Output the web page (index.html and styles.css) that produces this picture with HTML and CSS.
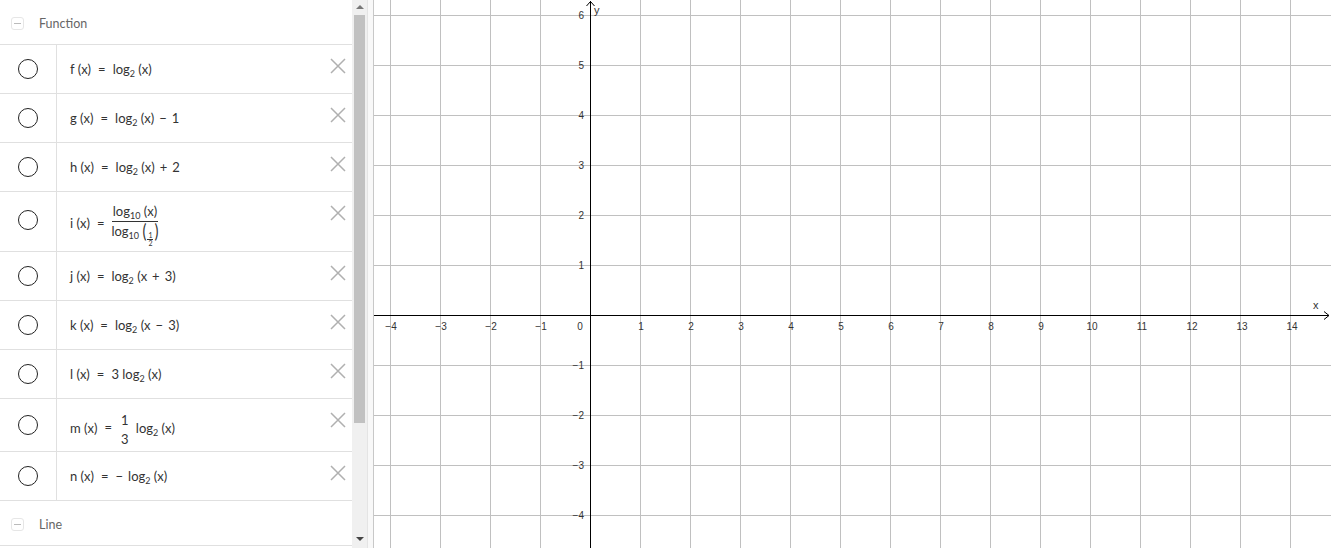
FILE: index.html
```html
<!DOCTYPE html>
<html>
<head>
<meta charset="utf-8">
<link rel="stylesheet" href="styles.css">
</head>
<body>
<div class="app">
  <div class="panel">
    <div class="group-head">
      <span class="collapse"><span class="dash"></span></span>
      <span class="group-title">Function</span>
    </div>

    <div class="row">
      <div class="marble"><span class="circle"></span></div>
      <div class="formula"><span class="expr">f <span class="p">(x)</span><span class="eq">=</span>log<sub>2</sub> <span class="p">(x)</span></span></div>
      <svg class="del" viewBox="0 0 16 16"><path d="M1 1L15 15M15 1L1 15"/></svg>
    </div>
    <div class="row">
      <div class="marble"><span class="circle"></span></div>
      <div class="formula"><span class="expr">g <span class="p">(x)</span><span class="eq">=</span>log<sub>2</sub> <span class="p">(x)</span><span class="op">−</span>1</span></div>
      <svg class="del" viewBox="0 0 16 16"><path d="M1 1L15 15M15 1L1 15"/></svg>
    </div>
    <div class="row">
      <div class="marble"><span class="circle"></span></div>
      <div class="formula"><span class="expr">h <span class="p">(x)</span><span class="eq">=</span>log<sub>2</sub> <span class="p">(x)</span><span class="op">+</span>2</span></div>
      <svg class="del" viewBox="0 0 16 16"><path d="M1 1L15 15M15 1L1 15"/></svg>
    </div>
    <div class="row row-tall">
      <div class="marble"><span class="circle"></span></div>
      <div class="formula fm-tall"><span class="expr">i <span class="p">(x)</span><span class="eq">=</span><span class="frac"><span class="num">log<sub>10</sub> <span class="p">(x)</span></span><span class="den">log<sub>10</sub> <span class="big">(</span><span class="mini"><span class="mn">1</span><span class="md">2</span></span><span class="big">)</span></span></span></span></div>
      <svg class="del" viewBox="0 0 16 16"><path d="M1 1L15 15M15 1L1 15"/></svg>
    </div>
    <div class="row">
      <div class="marble"><span class="circle"></span></div>
      <div class="formula"><span class="expr">j <span class="p">(x)</span><span class="eq">=</span>log<sub>2</sub> <span class="p">(x<span class="op">+</span>3)</span></span></div>
      <svg class="del" viewBox="0 0 16 16"><path d="M1 1L15 15M15 1L1 15"/></svg>
    </div>
    <div class="row">
      <div class="marble"><span class="circle"></span></div>
      <div class="formula"><span class="expr">k <span class="p">(x)</span><span class="eq">=</span>log<sub>2</sub> <span class="p">(x<span class="op">−</span>3)</span></span></div>
      <svg class="del" viewBox="0 0 16 16"><path d="M1 1L15 15M15 1L1 15"/></svg>
    </div>
    <div class="row">
      <div class="marble"><span class="circle"></span></div>
      <div class="formula"><span class="expr">l <span class="p">(x)</span><span class="eq">=</span>3 log<sub>2</sub> <span class="p">(x)</span></span></div>
      <svg class="del" viewBox="0 0 16 16"><path d="M1 1L15 15M15 1L1 15"/></svg>
    </div>
    <div class="row row-mid">
      <div class="marble"><span class="circle"></span></div>
      <div class="formula fm-low"><span class="expr">m <span class="p">(x)</span><span class="eq">=</span><span class="frac frac-small"><span class="num">1</span><span class="den">3</span></span> log<sub>2</sub> <span class="p">(x)</span></span></div>
      <svg class="del" viewBox="0 0 16 16"><path d="M1 1L15 15M15 1L1 15"/></svg>
    </div>
    <div class="row">
      <div class="marble"><span class="circle"></span></div>
      <div class="formula"><span class="expr">n <span class="p">(x)</span><span class="eq">=</span><span class="neg">−</span>log<sub>2</sub> <span class="p">(x)</span></span></div>
      <svg class="del" viewBox="0 0 16 16"><path d="M1 1L15 15M15 1L1 15"/></svg>
    </div>

    <div class="group-head">
      <span class="collapse"><span class="dash"></span></span>
      <span class="group-title">Line</span>
    </div>
  </div>

  <div class="scrollbar">
    <div class="arrow up"></div>
    <div class="thumb"></div>
    <div class="arrow down"></div>
  </div>
  <div class="splitter"></div>

  <div class="graph">
    <svg width="957" height="548" viewBox="0 0 957 548" xmlns="http://www.w3.org/2000/svg">
      <g stroke="#c0c0c0" stroke-width="1" shape-rendering="crispEdges">
        <line x1="16.5" y1="0" x2="16.5" y2="548"/>
        <line x1="66.5" y1="0" x2="66.5" y2="548"/>
        <line x1="116.5" y1="0" x2="116.5" y2="548"/>
        <line x1="166.5" y1="0" x2="166.5" y2="548"/>
        <line x1="266.5" y1="0" x2="266.5" y2="548"/>
        <line x1="316.5" y1="0" x2="316.5" y2="548"/>
        <line x1="366.5" y1="0" x2="366.5" y2="548"/>
        <line x1="416.5" y1="0" x2="416.5" y2="548"/>
        <line x1="466.5" y1="0" x2="466.5" y2="548"/>
        <line x1="516.5" y1="0" x2="516.5" y2="548"/>
        <line x1="566.5" y1="0" x2="566.5" y2="548"/>
        <line x1="616.5" y1="0" x2="616.5" y2="548"/>
        <line x1="666.5" y1="0" x2="666.5" y2="548"/>
        <line x1="716.5" y1="0" x2="716.5" y2="548"/>
        <line x1="766.5" y1="0" x2="766.5" y2="548"/>
        <line x1="816.5" y1="0" x2="816.5" y2="548"/>
        <line x1="866.5" y1="0" x2="866.5" y2="548"/>
        <line x1="916.5" y1="0" x2="916.5" y2="548"/>
        <line x1="0" y1="15.5" x2="957" y2="15.5"/>
        <line x1="0" y1="65.5" x2="957" y2="65.5"/>
        <line x1="0" y1="115.5" x2="957" y2="115.5"/>
        <line x1="0" y1="165.5" x2="957" y2="165.5"/>
        <line x1="0" y1="215.5" x2="957" y2="215.5"/>
        <line x1="0" y1="265.5" x2="957" y2="265.5"/>
        <line x1="0" y1="365.5" x2="957" y2="365.5"/>
        <line x1="0" y1="415.5" x2="957" y2="415.5"/>
        <line x1="0" y1="465.5" x2="957" y2="465.5"/>
        <line x1="0" y1="515.5" x2="957" y2="515.5"/>
      </g>
      <g stroke="#000" stroke-width="1" fill="none">
        <line x1="0" y1="315.5" x2="955" y2="315.5" shape-rendering="crispEdges"/>
        <line x1="216.5" y1="1" x2="216.5" y2="548" shape-rendering="crispEdges"/>
        <polyline points="212.5,6 216.5,1.5 220.5,6"/>
        <polyline points="950,311.5 955,315.5 950,319.5"/>
      </g>
      <g font-family="Liberation Sans, Arial, sans-serif" font-size="10" fill="#333" text-anchor="middle">
        <text x="17" y="330">−4</text>
        <text x="67" y="330">−3</text>
        <text x="117" y="330">−2</text>
        <text x="167" y="330">−1</text>
        <text x="206" y="330">0</text>
        <text x="267" y="330">1</text>
        <text x="317" y="330">2</text>
        <text x="367" y="330">3</text>
        <text x="417" y="330">4</text>
        <text x="467" y="330">5</text>
        <text x="517" y="330">6</text>
        <text x="567" y="330">7</text>
        <text x="617" y="330">8</text>
        <text x="667" y="330">9</text>
        <text x="718" y="330">10</text>
        <text x="768" y="330">11</text>
        <text x="818" y="330">12</text>
        <text x="868" y="330">13</text>
        <text x="918" y="330">14</text>
      </g>
      <g font-family="Liberation Sans, Arial, sans-serif" font-size="10" fill="#333" text-anchor="end">
        <text x="210" y="19">6</text>
        <text x="210" y="69">5</text>
        <text x="210" y="119">4</text>
        <text x="210" y="169">3</text>
        <text x="210" y="219">2</text>
        <text x="210" y="269">1</text>
        <text x="210" y="369">−1</text>
        <text x="210" y="419">−2</text>
        <text x="210" y="469">−3</text>
        <text x="210" y="519">−4</text>
      </g>
      <g font-family="Liberation Sans, Arial, sans-serif" font-size="11" fill="#333">
        <text x="220" y="14">y</text>
        <text x="939" y="309">x</text>
      </g>
    </svg>
  </div>
</div>
</body>
</html>
```

FILE: styles.css
```css
html, body {
  margin: 0;
  padding: 0;
  background: #fff;
}
.app {
  display: flex;
  width: 1331px;
  height: 548px;
  overflow: hidden;
}
.panel {
  width: 352px;
  flex: none;
  height: 548px;
  overflow: hidden;
  background: #fff;
  font-family: Lato, "Open Sans", sans-serif;
}
.group-head {
  height: 45px;
  border-bottom: 1px solid #e0e0e0;
  display: flex;
  align-items: center;
  box-sizing: border-box;
  padding-top: 2px;
}
.collapse {
  width: 13px;
  height: 13px;
  margin-left: 11px;
  border: 1px solid #e6e6e6;
  border-radius: 3px;
  display: flex;
  align-items: center;
  justify-content: center;
  box-sizing: border-box;
}
.dash {
  width: 7px;
  height: 1px;
  background: #bbb;
}
.group-title {
  margin-left: 15px;
  font-size: 12.5px;
  color: #666;
}
.row {
  display: flex;
  height: 49px;
  border-bottom: 1px solid #e0e0e0;
  box-sizing: border-box;
  position: relative;
}
.row-tall { height: 60px; }
.row-mid { height: 53px; }
.marble {
  width: 57px;
  flex: none;
  border-right: 1px solid #e0e0e0;
  display: flex;
  align-items: center;
  justify-content: center;
  box-sizing: border-box;
}
.row-tall .marble { padding-bottom: 4px; }
.circle {
  width: 20px;
  height: 20px;
  border: 1.5px solid #222;
  border-radius: 50%;
  box-sizing: border-box;
  margin-right: 1px;
}
.formula {
  flex: 1;
  display: flex;
  align-items: center;
  padding-left: 13px;
  font-size: 13px;
  color: #333;
}
.fm-low { padding-top: 8px; }
.fm-tall { padding-top: 6px; }
.expr {
  white-space: pre;
  line-height: 16px;
}
.expr sub {
  font-size: 9px;
  vertical-align: -3px;
  line-height: 0;
}
.eq { margin: 0 7px; }
.op { margin: 0 5px; }
.neg { margin-right: 5px; }
.frac {
  display: inline-flex;
  flex-direction: column;
  align-items: center;
  vertical-align: middle;
}
.frac .num {
  display: block;
  padding: 2px 1px 3px;
  border-bottom: 1px solid #333;
  line-height: 14px;
}
.frac .den {
  display: block;
  padding-top: 1px;
  line-height: 17px;
}
.big {
  font-size: 15px;
  display: inline-block;
  transform: scaleY(1.25);
  vertical-align: -1px;
  line-height: 15px;
}
.frac-small {
  margin-right: 2px;
}
.frac-small .num { border-bottom: none; padding: 0 2px 3px; line-height: 14px; }
.frac-small .den { padding-top: 2px; line-height: 14px; }
.mini {
  display: inline-flex;
  flex-direction: column;
  align-items: center;
  font-size: 7px;
  line-height: 7px;
  padding: 0 1px;
  vertical-align: -2px;
}
.mini .mn { border-bottom: 1px solid #333; padding: 0 1px; }
.del {
  position: absolute;
  right: 6px;
  top: 13px;
  width: 16px;
  height: 16px;
  fill: none;
  stroke: #b0b0b0;
  stroke-width: 1.5;
}
.scrollbar {
  width: 15px;
  flex: none;
  background: #f0f0f0;
  display: flex;
  flex-direction: column;
  align-items: center;
}
.arrow {
  width: 0;
  height: 0;
  border-left: 4px solid transparent;
  border-right: 4px solid transparent;
}
.arrow.up {
  border-bottom: 4px solid #777;
  margin-top: 5px;
}
.thumb {
  width: 11px;
  height: 408px;
  margin-top: 6px;
  background: #c1c1c1;
}
.arrow.down {
  border-top: 4px solid #444;
  margin-top: auto;
  margin-bottom: 7px;
}
.splitter {
  width: 7px;
  flex: none;
  background: #f8f8f8;
  border-left: 1px solid #e4e4e4;
  border-right: 1px solid #c8c8c8;
  box-sizing: border-box;
}
.graph {
  flex: 1;
  height: 548px;
  overflow: hidden;
  background: #fff;
}
.graph svg { display: block; }
```
